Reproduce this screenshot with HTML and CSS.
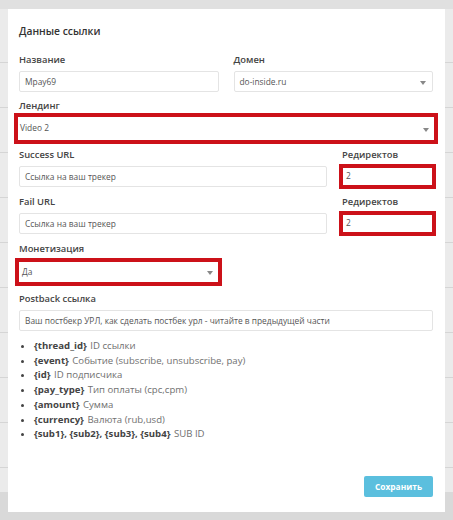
FILE: index.html
```html
<!DOCTYPE html>
<html lang="ru">
<head>
<meta charset="utf-8">
<title>Данные ссылки</title>
<link rel="stylesheet" href="styles.css">
</head>
<body>
<div class="backdrop">
  <div class="modal">
    <h2 class="title">Данные ссылки</h2>

    <div class="row two">
      <div class="field">
        <label class="label">Название</label>
        <div class="input">Mpay69</div>
      </div>
      <div class="field">
        <label class="label">Домен</label>
        <div class="input select">do-inside.ru<span class="caret"></span></div>
      </div>
    </div>

    <div class="row">
      <div class="field">
        <label class="label">Лендинг</label>
        <div class="hl hl-wide">
          <div class="input select bare">Video 2<span class="caret"></span></div>
        </div>
      </div>
    </div>

    <div class="row url">
      <div class="field">
        <label class="label">Success URL</label>
        <div class="input">Ссылка на ваш трекер</div>
      </div>
      <div class="field">
        <label class="label">Редиректов</label>
        <div class="hl hl-small"><div class="input bare">2</div></div>
      </div>
    </div>

    <div class="row url">
      <div class="field">
        <label class="label">Fail URL</label>
        <div class="input">Ссылка на ваш трекер</div>
      </div>
      <div class="field">
        <label class="label">Редиректов</label>
        <div class="hl hl-small"><div class="input bare">2</div></div>
      </div>
    </div>

    <div class="row two">
      <div class="field">
        <label class="label">Монетизация</label>
        <div class="hl hl-half">
          <div class="input select bare">Да<span class="caret"></span></div>
        </div>
      </div>
    </div>

    <div class="row">
      <div class="field">
        <label class="label">Postback ссылка</label>
        <div class="input">Ваш постбекр УРЛ, как сделать постбек урл - читайте в предыдущей части</div>
      </div>
    </div>

    <ul class="vars">
      <li><b>{thread_id}</b> ID ссылки</li>
      <li><b>{event}</b> Событие (subscribe, unsubscribe, pay)</li>
      <li><b>{id}</b> ID подписчика</li>
      <li><b>{pay_type}</b> Тип оплаты (cpc,cpm)</li>
      <li><b>{amount}</b> Сумма</li>
      <li><b>{currency}</b> Валюта (rub,usd)</li>
      <li><b>{sub1}, {sub2}, {sub3}, {sub4}</b> SUB ID</li>
    </ul>

    <div class="footer">
      <button class="btn" type="button">Сохранить</button>
    </div>
  </div>
</div>
</body>
</html>
```

FILE: styles.css
```css
* { box-sizing: border-box; }

html, body {
  margin: 0;
  padding: 0;
  height: 100%;
}

body {
  font-family: "Open Sans", "Liberation Sans", sans-serif;
  color: #333;
  overflow: hidden;
  background-color: #ebebeb;
  background-image:
    linear-gradient(to bottom, #e0e0e0 0 9px, transparent 9px),
    linear-gradient(to bottom, transparent 0 492px, #d9d9d9 492px),
    repeating-linear-gradient(to bottom, transparent 0 44px, #d5d5d5 44px 45px);
  background-position: 0 0, 0 0, 0 18px;
}

.backdrop {
  padding: 9px 8px 8px 8px;
}

.modal {
  background: #fff;
  width: 437px;
  height: 503px;
  padding: 15px 12px 15px 11px;
  display: flex;
  flex-direction: column;
}

.title {
  margin: 0;
  font-size: 10.3px;
  line-height: 14px;
  font-weight: 600;
  color: #333;
}

.row {
  display: grid;
  grid-template-columns: 1fr;
  column-gap: 15px;
}

.row.two { grid-template-columns: 1fr 1fr; }
.row.url { grid-template-columns: 1fr 91px; }

.field {
  display: flex;
  flex-direction: column;
  min-width: 0;
}

.label {
  display: block;
  font-size: 9.4px;
  line-height: 14px;
  font-weight: 600;
  color: #444;
  margin-bottom: 4px;
}

.input {
  position: relative;
  height: 21px;
  border: 1px solid #e4e4e4;
  border-radius: 2px;
  font-size: 8.4px;
  line-height: 19px;
  padding: 0 5px;
  color: #555;
  white-space: nowrap;
  overflow: hidden;
  background: #fff;
}

.input.bare {
  border: none;
  height: 100%;
  line-height: 100%;
  display: flex;
  align-items: center;
  padding: 0 1px;
}

.caret {
  position: absolute;
  right: 6px;
  top: 50%;
  margin-top: -1px;
  width: 0;
  height: 0;
  border-left: 3px solid transparent;
  border-right: 3px solid transparent;
  border-top: 4px solid #888;
}

.hl {
  border: 4px solid #cc1119;
  background: #fff;
}

.hl-wide {
  height: 31px;
  margin: 0 -5px 0 -5px;
  padding: 0 0 0 1px;
}
.hl-wide .caret { right: 5px; }

.hl-small {
  height: 25px;
  margin: -2px -3px 0 -3px;
  padding: 0 0 0 2px;
}

.hl-half {
  height: 28px;
  margin: 2px -3px 0 -4px;
  padding: 0 0 0 2px;
}
.hl-half .caret { right: 5px; }

/* vertical rhythm */
.modal > .row:nth-of-type(1) { margin-top: 15px; }
.modal > .row:nth-of-type(2) { margin-top: 7px; }
.modal > .row:nth-of-type(3) { margin-top: 4px; }
.modal > .row:nth-of-type(4) { margin-top: 6px; }
.modal > .row:nth-of-type(5) { margin-top: 6px; }
.modal > .row:nth-of-type(6) { margin-top: 6px; }

.modal > .row:nth-of-type(2) .label,
.modal > .row:nth-of-type(5) .label { margin-bottom: 0; }

.vars {
  margin: 8px 0 0 0;
  padding: 0 0 0 15px;
  font-size: 9.6px;
  line-height: 14.7px;
  color: #707070;
}

.vars li::marker {
  color: #444;
}

.vars b {
  font-weight: 700;
  color: #444;
  margin-right: 1px;
}

.footer {
  margin-top: auto;
  display: flex;
  justify-content: flex-end;
}

.btn {
  font-family: "Open Sans", "Liberation Sans", sans-serif;
  width: 69px;
  height: 21px;
  border: none;
  border-radius: 2px;
  background: #5bbfde;
  color: #fff;
  font-size: 8.4px;
  font-weight: 700;
  padding: 0;
  cursor: pointer;
}
```
